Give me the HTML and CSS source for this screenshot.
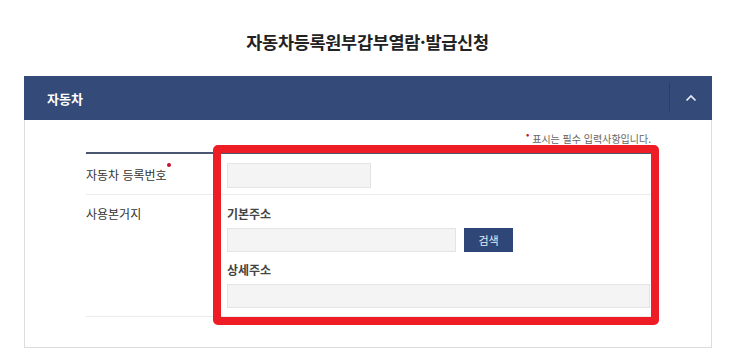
FILE: index.html
```html
<!DOCTYPE html>
<html lang="ko">
<head>
<meta charset="utf-8">
<title>자동차등록원부갑부열람·발급신청</title>
<link rel="stylesheet" href="styles.css">
</head>
<body>
<div class="page">
  <h1 class="title">자동차등록원부갑부열람·발급신청</h1>
  <section class="panel">
    <div class="panel-head">
      <span class="panel-title">자동차</span>
      <button class="toggle" type="button" aria-label="접기">
        <svg width="12" height="8" viewBox="0 0 12 8"><path d="M1.5 6.5 L6 2 L10.5 6.5" fill="none" stroke="#e8ecf4" stroke-width="1.7"/></svg>
      </button>
    </div>
    <div class="panel-body">
      <p class="note"><span class="req">•</span> 표시는 필수 입력사항입니다.</p>
      <div class="form">
        <div class="row row-first">
          <div class="label">자동차 등록번호<span class="req-dot"></span></div>
          <div class="cell"><input class="input input-sm" type="text"></div>
        </div>
        <div class="row row-addr">
          <div class="label label-top">사용본거지</div>
          <div class="cell cell-col">
            <div class="sub">기본주소</div>
            <div class="line">
              <input class="input input-md" type="text">
              <button class="btn" type="button">검색</button>
            </div>
            <div class="sub sub2">상세주소</div>
            <input class="input input-full" type="text">
          </div>
        </div>
      </div>
    </div>
  </section>
  <div class="highlight"></div>
</div>
</body>
</html>
```

FILE: styles.css
```css
* { box-sizing: border-box; }
html, body { margin: 0; background: #fff; }
body {
  font-family: "Noto Sans CJK KR", "Noto Sans", sans-serif;
  color: #333;
}
.page { position: relative; width: 735px; height: 363px; }
.title {
  margin: 0;
  height: 76px;
  padding-top: 6px;
  display: flex;
  align-items: center;
  justify-content: center;
  font-size: 17.5px;
  font-weight: 700;
  color: #222;
  letter-spacing: -0.3px;
}
.panel {
  margin-left: 24px;
  width: 688px;
  border: 1px solid #dcdcdc;
  border-top: none;
}
.panel-head {
  height: 44px;
  margin: 0 -1px;
  background: #344a78;
  display: flex;
  align-items: center;
  justify-content: space-between;
}
.panel-title {
  padding-left: 23px;
  color: #fff;
  font-size: 13px;
  font-weight: 700;
}
.toggle {
  width: 43px;
  height: 30px;
  border: none;
  border-left: 1px solid #2b3e66;
  background: transparent;
  display: flex;
  align-items: center;
  justify-content: center;
  padding: 0;
}
.panel-body {
  padding: 12px 60px 30px 61px;
}
.note {
  margin: 0 0 6px;
  text-align: right;
  font-size: 10px;
  line-height: 14px;
  color: #666;
}
.req { color: #c8102e; font-size: 10px; position: relative; top: -5px; }
.form { border-top: 2px solid #4a5670; }
.row { display: flex; border-bottom: 1px solid #ececec; }
.row-first { height: 41px; align-items: center; }
.label {
  width: 127px;
  font-size: 12px;
  color: #333;
  position: relative;
}
.req-dot {
  position: absolute;
  width: 4px; height: 4px;
  border-radius: 50%;
  background: #c8102e;
  left: 81px; top: -3px;
}
.label-top { padding-top: 10px; align-self: flex-start; }
.cell { padding-left: 14px; flex: 1; }
.cell-col { display: flex; flex-direction: column; padding-top: 11px; padding-bottom: 8px; }
.sub { font-size: 12px; font-weight: 700; color: #444; height: 22px; line-height: 16px; }
.sub2 { height: 32px; padding-top: 10px; line-height: 16px; }
.line { display: flex; gap: 8px; }
.input {
  height: 25px;
  background: #f4f4f4;
  border: 1px solid #e4e4e4;
  outline: none;
  padding: 0 6px;
  margin: 0;
}
.input-sm { width: 144px; }
.input-md { width: 229px; height: 24px; }
.input-full { width: 423px; height: 24px; }
.btn {
  width: 49px;
  height: 24px;
  border: none;
  background: #2f4777;
  color: #e8ecf4;
  font-family: inherit;
  font-size: 11px;
  padding: 0;
}
.highlight {
  position: absolute;
  left: 213px; top: 145px;
  width: 446px; height: 180px;
  border: 8px solid #ee1c25;
  border-radius: 5px;
}
```
